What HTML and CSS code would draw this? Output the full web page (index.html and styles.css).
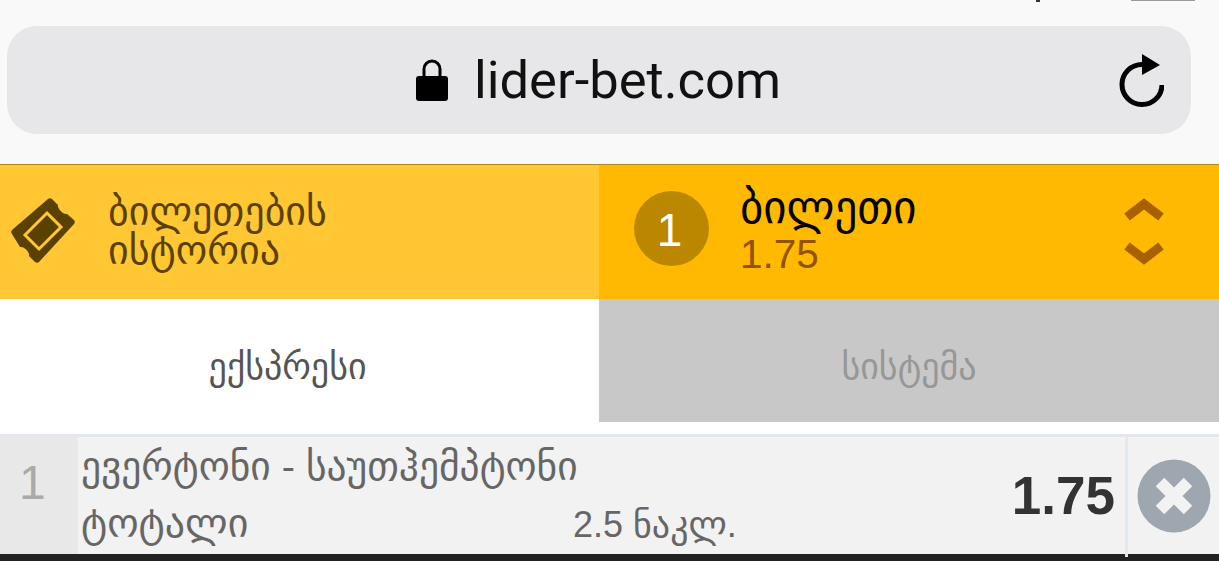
FILE: index.html
```html
<!DOCTYPE html>
<html lang="ka">
<head>
  <meta charset="UTF-8" />
  <meta name="viewport" content="width=device-width, initial-scale=1.0" />
  <title>lider-bet.com</title>
  <link rel="stylesheet" href="styles.css">
</head>
<body>
  <header class="browser-bar">
    <span class="status-tick"></span>
    <span class="status-battery"></span>
    <div class="address">
      <div class="address-center">
        <svg class="lock" viewBox="0 0 32 42" width="32" height="42">
          <path d="M8 19V10a8 8 0 0 1 16 0v9" fill="none" stroke="#000" stroke-width="3"/>
          <rect x="0" y="17" width="32" height="25" rx="3" fill="#000"/>
        </svg>
        <span class="url">lider-bet.com</span>
      </div>
      <svg class="reload" viewBox="0 0 46 54" width="46" height="54">
        <path d="M44 31A20 20 0 1 1 24 10.500" fill="none" stroke="#000" stroke-width="5"/>
        <path d="M24 0l18 11-18 10z" fill="#000"/>
      </svg>
    </div>
  </header>

  <div class="ticket-row">
    <div class="history">
      <svg class="ticket-icon" viewBox="0 0 66 66" width="66" height="66">
        <path d="M38 1c1-1 3-1 4 0l6 6c-1 3 5 10 9 9l7 6c1 1 1 3 0 4L29 64c-1 1-3 1-4 0l-6-6c1-4-5-10-9-9L2 36c-1-1-1-3 0-4z" fill="#5a4100"/>
        <path d="M37 15l14 14-22 22-14-14z" fill="#5a4100" stroke="#ffc733" stroke-width="3"/>
      </svg>
      <div class="history-label">ბილეთების<br>ისტორია</div>
    </div>
    <div class="ticket">
      <div class="ticket-count">1</div>
      <div class="ticket-info">
        <div class="ticket-title">ბილეთი</div>
        <div class="ticket-odds">1.75</div>
      </div>
      <svg class="arrows" viewBox="0 0 40 70" width="40" height="70">
        <path d="M3 21L20 8l17 13M3 50l17 13 17-13" fill="none" stroke="#a96000" stroke-width="9"/>
      </svg>
    </div>
  </div>

  <div class="tabs">
    <div class="tab active">ექსპრესი</div>
    <div class="tab">სისტემა</div>
  </div>

  <div class="bet">
    <div class="bet-num">1</div>
    <div class="bet-body">
      <div class="bet-match">ევერტონი - საუთჰემპტონი</div>
      <div class="bet-line">
        <span class="bet-market">ტოტალი</span>
        <span class="bet-pick">2.5 ნაკლ.</span>
      </div>
    </div>
    <div class="bet-odds">1.75</div>
    <div class="bet-remove">
      <svg viewBox="0 0 74 74" width="74" height="74">
        <circle cx="37" cy="37" r="36.500" fill="#9ea7af"/>
        <path d="M23 23l28 28M51 23L23 51" stroke="#f2f2f2" stroke-width="12"/>
      </svg>
    </div>
  </div>
  <div class="bottom-bar"></div>
</body>
</html>
```

FILE: styles.css
```css
* { box-sizing: border-box; }
html, body {
  margin: 0;
  height: 561px;
  overflow: hidden;
}
body {
  background: #fff;
  font-family: 'Liberation Sans', 'DejaVu Sans', sans-serif;
  display: flex;
  flex-direction: column;
}
.browser-bar {
  position: relative;
  height: 165px;
  padding: 26px 28px 0 7px;
  background: #f9f9f9;
  border-bottom: 1px solid #b08a1e;
}
.status-tick {
  position: absolute;
  top: 0;
  left: 1036px;
  width: 4px;
  height: 2px;
  background: #333;
}
.status-battery {
  position: absolute;
  top: 0;
  left: 1131px;
  width: 64px;
  height: 1px;
  background: #999;
}
.address {
  position: relative;
  height: 108px;
  background: #e7e7e9;
  border-radius: 30px;
  display: flex;
  align-items: center;
  justify-content: center;
}
.address-center {
  display: flex;
  align-items: center;
  gap: 26px;
  margin-left: -1px;
}
.lock { display: block; }
.url {
  font-family: Roboto, 'Liberation Sans', sans-serif;
  font-size: 52.500px;
  line-height: 60px;
  color: #111;
}
.reload {
  position: absolute;
  right: 27px;
  top: 28px;
}
.ticket-row {
  display: grid;
  grid-template-columns: 599px 1fr;
  height: 134px;
}
.history {
  background: #ffc733;
  display: flex;
  align-items: center;
  padding-left: 10px;
}
.ticket-icon { flex: none; margin-top: -2px; }
.history-label {
  margin-left: 32px;
  margin-top: -2px;
  font-size: 40px;
  line-height: 39px;
  color: #5a4100;
}
.ticket {
  background: #ffb900;
  display: flex;
  align-items: center;
  padding-left: 35px;
  padding-right: 55px;
}
.ticket-count {
  width: 75px;
  height: 75px;
  margin-top: -8px;
  padding-right: 4px;
  border-radius: 50%;
  background: #bb8700;
  color: #fff;
  font-size: 46px;
  line-height: 78px;
  text-align: center;
  flex: none;
}
.ticket-info { margin-left: 31px; flex: 1; }
.ticket-title {
  font-size: 45px;
  line-height: 44px;
  color: #000;
}
.ticket-odds {
  font-size: 40.500px;
  line-height: 48px;
  color: #945300;
}
.arrows { margin-top: -3px; }
.tabs {
  display: grid;
  grid-template-columns: 599px 1fr;
  height: 123px;
}
.tab {
  background: #c8c8c8;
  color: #979797;
  font-size: 36px;
  display: flex;
  align-items: center;
  justify-content: center;
  padding-top: 12px;
}
.tab.active {
  background: #fff;
  color: #555;
  padding-right: 24px;
}
.bet {
  margin-top: 12px;
  height: 120px;
  display: flex;
  background: #f2f2f2;
  border-top: 3px solid #e1e9f0;
  color: #666;
}
.bet-num {
  width: 78px;
  background: #e8e8e8;
  color: #aaa;
  font-size: 48px;
  padding: 18px 0 0 19px;
  flex: none;
}
.bet-body {
  flex: 1;
  padding: 5px 0 0 3px;
}
.bet-match {
  font-size: 39.500px;
  line-height: 48px;
}
.bet-line {
  display: flex;
  align-items: baseline;
  font-size: 40px;
  line-height: 48px;
  margin-top: 9px;
}
.bet-market { width: 492px; }
.bet-pick { font-size: 36px; }
.bet-odds {
  font-size: 53px;
  font-weight: bold;
  color: #333;
  padding: 28px 10px 0 0;
}
.bet-remove {
  position: relative;
  width: 94px;
  flex: none;
  margin-bottom: -3px;
  border-left: 3px solid #e1e9f0;
  padding: 22px 0 0 9px;
}
.bet-remove svg { display: block; }
.bottom-bar {
  height: 7px;
  background: #222;
}
```
